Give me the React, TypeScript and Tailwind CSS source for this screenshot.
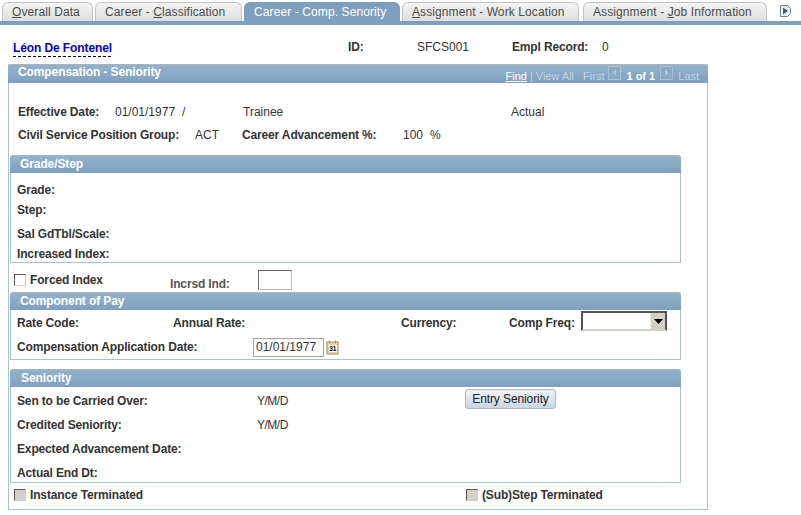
const font = "font-['Liberation_Sans',Arial,sans-serif]";

function Tab({ label, width, active }: { label: React.ReactNode; width: string; active?: boolean }) {
  return (
    <div
      className={`${width} h-[19px] flex items-center pl-[9px] rounded-t-[6px] border border-b-0 text-[12px] leading-none tracking-[0.1px] whitespace-nowrap ${
        active
          ? "bg-[#7f9fbf] border-[#7f9fbf] text-white"
          : "bg-gradient-to-b from-[#f4f4f4] to-[#dedede] border-[#c4c4c4] text-[#4a4a4a]"
      }`}
    >
      <span>{label}</span>
    </div>
  );
}

function Label({ children, className = "" }: { children: React.ReactNode; className?: string }) {
  return <span className={`font-bold text-[12px] leading-none text-[#333] tracking-[-0.15px] whitespace-nowrap ${className}`}>{children}</span>;
}

function Value({ children, className = "" }: { children: React.ReactNode; className?: string }) {
  return <span className={`text-[12px] leading-none text-[#333] ${className}`}>{children}</span>;
}

function Header({ title, className = "" }: { title: string; className?: string }) {
  return (
    <div
      className={`h-[18px] pb-[2px] flex items-center rounded-t-[3px] border-t border-[#a9b4bf] bg-gradient-to-b from-[#93b3cc] to-[#7f9fbf] text-white font-bold text-[12px] leading-none tracking-[-0.1px] ${className}`}
    >
      {title}
    </div>
  );
}

function Check({ disabled }: { disabled?: boolean }) {
  return (
    <span
      className={`block w-[12px] h-[12px] border border-t-[#555] border-l-[#555] border-r-[#ccc] border-b-[#ccc] ${
        disabled ? "bg-[#d4d0c8]" : "bg-white"
      }`}
    />
  );
}

function NavArrow({ dir }: { dir: "l" | "r" }) {
  return (
    <svg width="13" height="14" viewBox="0 0 13 14" className="shrink-0 -mt-[7px]">
      <rect x="0.5" y="0.5" width="12" height="13" fill="#8aa9c4" stroke="#a9c0d3" />
      <path d={dir === "l" ? "M8 3.5v6L4.5 6.5z" : "M5 3.5v6l3.5-3z"} fill="#b4c8d9" />
    </svg>
  );
}

export default function App() {
  return (
    <div className={`${font} w-[801px] h-[515px] bg-white overflow-hidden`}>
      {/* tabs */}
      <div className="pt-[2px] flex items-end pl-[2px] h-[21px]">
        <div className="flex gap-[2px]">
          <Tab width="w-[91px]" label={<><span className="underline">O</span>verall Data</>} />
          <Tab width="w-[147px]" label={<>Career - <span className="underline">C</span>lassification</>} />
          <Tab width="w-[156px]" active label="Career - Comp. Senority" />
          <Tab width="w-[177px]" label={<><span className="underline">A</span>ssignment - Work Location</>} />
          <Tab width="w-[184px] ml-[2px]" label={<>Assignment - <span className="underline">J</span>ob Information</>} />
        </div>
        <svg width="13" height="14" viewBox="0 0 13 14" className="ml-[12px] mb-[3px]">
          <path d="M1.5 1.5h7l3 3v5l-3 3h-7z" fill="#eef2f6" stroke="#6f7f90" />
          <path d="M4 3.5v7l5-3.5z" fill="#2f5f95" />
        </svg>
      </div>
      <div className="h-[4px] bg-[#7f9fbf]" />

      {/* employee row */}
      <div className="h-[39px] pt-[5px] flex items-center text-[12px]">
        <span className="ml-[13px] mt-[4px] w-[98px] font-bold text-[12px] leading-[15px] tracking-[-0.1px] whitespace-nowrap text-[#0000cc] border-b border-dashed border-black">
          Léon De Fontenel
        </span>
        <Label className="ml-[237px] w-[69px]">ID:</Label>
        <Value className="w-[95px]">SFCS001</Value>
        <Label className="w-[90px]">Empl Record:</Label>
        <Value>0</Value>
      </div>

      {/* main panel */}
      <div className="ml-[8px] w-[700px] h-[446px] border-x border-b border-[#a7c0dc]">
        <div className="h-[19px] -mx-px flex items-center justify-between rounded-t-[3px] border-t border-[#a9b4bf] bg-gradient-to-b from-[#93b3cc] to-[#7f9fbf] pl-[10px] pr-[9px]">
          <span className="text-white font-bold text-[12px] leading-none tracking-[-0.1px] -mt-[5px]">Compensation - Seniority</span>
          <div className="flex items-center text-[11px] leading-none text-[#c3d3e0] mt-[4px]">
            <span className="text-white underline mr-[3px]">Find</span>
            <span className="mr-[3px]">|</span>
            <span className="mr-[9px]">View All</span>
            <span className="mr-[4px]">First</span>
            <NavArrow dir="l" />
            <span className="text-white font-bold mx-[5px]">1 of 1</span>
            <NavArrow dir="r" />
            <span className="ml-[5px]">Last</span>
          </div>
        </div>

        <div className="h-[72px] pl-[9px] pt-[22px]">
          <div className="flex items-center h-[14px]">
            <Label className="w-[97px]">Effective Date:</Label>
            <Value className="w-[67px]">01/01/1977</Value>
            <Value className="w-[61px]">/</Value>
            <Value className="w-[268px]">Trainee</Value>
            <Value>Actual</Value>
          </div>
          <div className="flex items-center h-[14px] mt-[9px]">
            <Label className="w-[177px]">Civil Service Position Group:</Label>
            <Value className="w-[47px]">ACT</Value>
            <Label className="w-[161px]">Career Advancement %:</Label>
            <Value className="w-[27px]">100</Value>
            <Value>%</Value>
          </div>
        </div>

        {/* grade / step */}
        <div className="ml-[1px] w-[671px]">
          <Header title="Grade/Step" className="pl-[10px]" />
          <div className="h-[90px] border-x border-b border-[#a7c0dc] pl-[6px] pt-[10px]">
            <div className="h-[14px] flex items-center"><Label>Grade:</Label></div>
            <div className="h-[14px] flex items-center mt-[6px]"><Label>Step:</Label></div>
            <div className="h-[14px] flex items-center mt-[10px]"><Label>Sal GdTbl/Scale:</Label></div>
            <div className="h-[14px] flex items-center mt-[6px]"><Label>Increased Index:</Label></div>
          </div>
        </div>

        <div className="h-[29px] flex pl-[5px]">
          <div className="flex items-center h-[20px] mt-[7px] w-[156px]">
            <Check />
            <Label className="ml-[4px]">Forced Index</Label>
          </div>
          <Label className="mt-[15px] w-[88px] text-[#555]">Incrsd Ind:</Label>
          <div className="mt-[7px] w-[34px] h-[20px] border border-t-[#666] border-l-[#666] border-r-[#bbb] border-b-[#bbb] bg-white" />
        </div>

        {/* component of pay */}
        <div className="ml-[1px] w-[671px]">
          <Header title="Component of Pay" className="pl-[10px]" />
          <div className="h-[50px] border-x border-b border-[#a7c0dc] pl-[6px]">
            <div className="flex items-center h-[25px]">
              <Label className="w-[156px]">Rate Code:</Label>
              <Label className="w-[228px]">Annual Rate:</Label>
              <Label className="w-[108px]">Currency:</Label>
              <Label className="w-[72px]">Comp Freq:</Label>
              <div className="w-[86px] h-[20px] flex justify-end border-2 border-t-[#555] border-l-[#555] border-r-[#555] border-b-[#d4d0c8] bg-white -mt-[3px]">
                <div className="w-[15px] bg-[#d4d0c8] flex items-center justify-center border-l border-[#eee]">
                  <svg width="9" height="5" viewBox="0 0 9 5"><path d="M0 0h9L4.5 5z" fill="#000" /></svg>
                </div>
              </div>
            </div>
            <div className="flex items-center h-[24px]">
              <Label className="w-[236px]">Compensation Application Date:</Label>
              <div className="w-[71px] h-[19px] border border-[#a3a3a3] bg-white flex items-center pl-[2px] text-[12px] text-[#333]">
                01/01/1977
              </div>
              <svg width="13" height="15" viewBox="0 0 13 15" className="ml-[2px]">
                <rect x="1" y="2" width="11" height="12" fill="#e9d7a8" stroke="#a58b5a" />
                <rect x="3" y="5" width="8" height="7" fill="#fffdf2" />
                <text x="3.2" y="11" fontSize="6.5" fontWeight="bold" fontFamily="Liberation Sans" fill="#000">31</text>
                <path d="M3.5 0.5v3M9.5 0.5v3" stroke="#a58b5a" />
              </svg>
            </div>
          </div>
        </div>

        <div className="h-[9px]" />

        {/* seniority */}
        <div className="ml-[1px] w-[671px]">
          <Header title="Seniority" className="pl-[11px]" />
          <div className="h-[96px] border-x border-b border-[#a7c0dc] pl-[6px] pt-[7px]">
            <div className="flex items-center h-[14px]">
              <Label className="w-[240px]">Sen to be Carried Over:</Label>
              <Value className="w-[208px] tracking-[-0.5px]">Y/M/D</Value>
              <button className="w-[91px] h-[20px] -mt-[4px] rounded-[3px] border border-[#b5b5b5] bg-gradient-to-b from-[#f0f3f7] to-[#c9d6e6] text-[12px] leading-none text-[#222] tracking-[-0.1px]">
                Entry Seniority
              </button>
            </div>
            <div className="flex items-center h-[14px] mt-[10px]">
              <Label className="w-[240px]">Credited Seniority:</Label>
              <Value className="tracking-[-0.5px]">Y/M/D</Value>
            </div>
            <div className="h-[14px] flex items-center mt-[10px]"><Label>Expected Advancement Date:</Label></div>
            <div className="h-[14px] flex items-center mt-[10px]"><Label>Actual End Dt:</Label></div>
          </div>
        </div>

        <div className="flex items-center h-[24px] pl-[5px]">
          <div className="flex items-center w-[452px]">
            <Check disabled />
            <Label className="ml-[4px]">Instance Terminated</Label>
          </div>
          <Check disabled />
          <Label className="ml-[4px]">(Sub)Step Terminated</Label>
        </div>
      </div>
    </div>
  );
}
